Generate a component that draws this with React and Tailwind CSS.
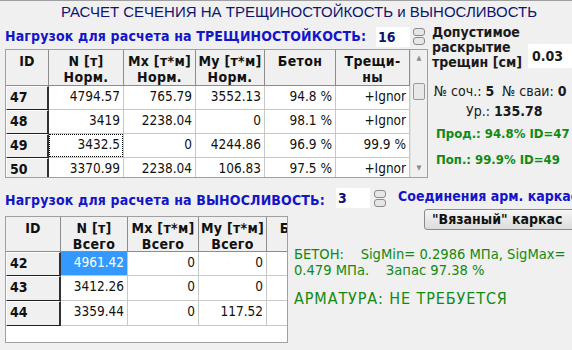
import React from "react";

const rows1 = [
  { id: "47", n: "4794.57", mx: "765.79", my: "3552.13", b: "94.8 %", t: "+Ignor" },
  { id: "48", n: "3419", mx: "2238.04", my: "0", b: "98.1 %", t: "+Ignor" },
  { id: "49", n: "3432.5", mx: "0", my: "4244.86", b: "96.9 %", t: "99.9 %", focus: true },
  { id: "50", n: "3370.99", mx: "2238.04", my: "106.83", b: "97.5 %", t: "+Ignor" },
];

const rows2 = [
  { id: "42", n: "4961.42", mx: "0", my: "0", sel: true },
  { id: "43", n: "3412.26", mx: "0", my: "0" },
  { id: "44", n: "3359.44", mx: "0", my: "117.52" },
];

function Spinner() {
  return (
    <div className="flex flex-col gap-[1px]">
      <div className="w-[12px] h-[8px] rounded-[3px] border border-[#8a8a8a] bg-[#e6e6e6]" />
      <div className="w-[12px] h-[8px] rounded-[3px] border border-[#8a8a8a] bg-[#e6e6e6]" />
    </div>
  );
}

function Head({ children }) {
  return (
    <div className="bg-[#f0f0f0] border-r border-b border-[#8c8c8c] text-center font-bold text-[14px] tracking-[0.3px] leading-[16px] pt-[3px] text-[#111] overflow-hidden whitespace-nowrap">
      {children}
    </div>
  );
}

function IdCell({ children }) {
  return (
    <div className="bg-[#f0f0f0] border-t border-l border-t-white border-l-white border-r-2 border-r-[#303030] border-b border-b-[#202020] font-bold text-[14px] leading-[16px] pl-[3px] pt-[2px] text-[#111]">
      {children}
    </div>
  );
}

function Cell({ children, sel, focus }) {
  return (
    <div
      className={
        sel
          ? "bg-[#3399ff] text-white border-r border-b border-[#c8c8c8] text-right pr-[3px] pt-[1px] text-[13.5px] leading-[18px]"
          : "bg-white text-[#111] border-r border-b border-[#c8c8c8] text-right pr-[3px] pt-[1px] text-[13.5px] leading-[18px]"
      }
    >
      {focus ? (
        <div className="-mt-[1px] -mr-[3px] h-[23px] border border-dotted border-black pr-[2px]">{children}</div>
      ) : (
        children
      )}
    </div>
  );
}

export default function App() {
  return (
    <div className="w-[572px] h-[350px] overflow-hidden bg-[#f0f0f0] font-['DejaVu_Sans_Condensed',sans-serif] border-t border-[#a0a0a0]">
      <div className="h-[23px] flex items-center justify-center pl-[26px] font-['Liberation_Sans',sans-serif] text-[15px] text-[#0e1470]">
        РАСЧЕТ СЕЧЕНИЯ НА ТРЕЩИНОСТОЙКОСТЬ и ВЫНОСЛИВОСТЬ
      </div>

      <div className="flex h-[157px]">
        <div className="w-[428px] pl-[5px] shrink-0">
          <div className="h-[25px] flex items-center">
            <span className="w-[371px] shrink-0 font-bold text-[14px] tracking-[0.15px] text-[#1515c8] whitespace-nowrap">
              Нагрузок для расчета на ТРЕЩИНОСТОЙКОСТЬ:
            </span>
            <div className="w-[34px] h-[20px] shrink-0 bg-white pl-[2px] font-bold text-[14px] leading-[20px] text-[#0e1470]">16</div>
            <div className="ml-[3px]">
              <Spinner />
            </div>
          </div>
          <div className="h-[129px] flex border border-[#a0a0a0] overflow-hidden">
            <div className="grid grid-cols-[43px_75px_72px_69px_71px_74px] grid-rows-[36px_24px_24px_24px_24px] bg-white">
              <Head>ID</Head>
              <Head>N [т]<br />Норм.</Head>
              <Head>Mx [т*м]<br />Норм.</Head>
              <Head>My [т*м]<br />Норм.</Head>
              <Head>Бетон</Head>
              <Head>Трещи-<br />ны</Head>
              {rows1.map((r) => (
                <React.Fragment key={r.id}>
                  <IdCell>{r.id}</IdCell>
                  <Cell focus={r.focus}>{r.n}</Cell>
                  <Cell>{r.mx}</Cell>
                  <Cell>{r.my}</Cell>
                  <Cell>{r.b}</Cell>
                  <Cell>{r.t}</Cell>
                </React.Fragment>
              ))}
            </div>
            <div className="w-[17px] flex flex-col items-center bg-[#f0f0f0] border-l border-[#e0e0e0]">
              <div className="h-[17px] flex items-center justify-center text-[7px] text-[#8a8a8a]">▲</div>
              <div className="mt-[16px] w-[12px] h-[17px] rounded-[2px] border border-[#9a9a9a] bg-[#e8e8e8]" />
              <div className="mt-auto h-[17px] flex items-center justify-center text-[7px] text-[#8a8a8a]">▼</div>
            </div>
          </div>
        </div>

        <div className="flex-1 pl-[4px] pt-[1px] text-[#1a1a1a]">
          <div className="flex">
            <div className="w-[96px] font-bold text-[14px] leading-[15px]">
              Допустимое
              <br />
              раскрытие
              <br />
              трещин [см]
            </div>
            <div className="mt-[19px] flex-1 h-[24px] bg-white pl-[4px] font-bold text-[14px] leading-[24px]">0.03</div>
          </div>
          <div className="mt-[12px] pl-[2px] text-[14px] leading-[18px] whitespace-nowrap">
            № соч.: <b>5</b>&nbsp; № сваи: <b>0</b>
          </div>
          <div className="mt-[2px] pl-[34px] text-[14px] leading-[18px]">
            Ур.: <b>135.78</b>
          </div>
          <div className="mt-[5px] pl-[4px] font-bold text-[13px] leading-[18px] text-[#128a12] whitespace-nowrap">
            Прод.: 94.8% ID=47
          </div>
          <div className="mt-[8px] pl-[4px] font-bold text-[13px] leading-[18px] text-[#128a12] whitespace-nowrap">
            Поп.: 99.9% ID=49
          </div>
        </div>
      </div>

      <div className="pl-[5px]">
        <div className="h-[28px] pt-[6px] flex items-center">
          <span className="w-[331px] shrink-0 font-bold text-[14px] tracking-[0.15px] text-[#1515c8] mt-[4px] whitespace-nowrap">
            Нагрузок для расчета на ВЫНОСЛИВОСТЬ:
          </span>
          <div className="w-[34px] h-[20px] shrink-0 bg-white pl-[2px] font-bold text-[14px] leading-[20px] text-[#0e1470]">3</div>
          <div className="ml-[4px] shrink-0">
            <Spinner />
          </div>
          <span className="ml-[12px] shrink-0 font-bold text-[14px] text-[#1515c8] whitespace-nowrap -mt-[4px]">
            Соединения арм. каркас
          </span>
        </div>
        <div className="flex">
          <div className="mt-[7px] w-[283px] h-[127px] shrink-0 border border-[#a0a0a0] bg-white overflow-hidden">
            <div className="grid grid-cols-[55px_67px_71px_68px_71px] grid-rows-[35px_24px_25px_25px]">
              <Head>ID</Head>
              <Head>N [т]<br />Всего</Head>
              <Head>Mx [т*м]<br />Всего</Head>
              <Head>My [т*м]<br />Всего</Head>
              <Head>Бетон</Head>
              {rows2.map((r) => (
                <React.Fragment key={r.id}>
                  <IdCell>{r.id}</IdCell>
                  <Cell sel={r.sel}>{r.n}</Cell>
                  <Cell>{r.mx}</Cell>
                  <Cell>{r.my}</Cell>
                  <Cell />
                </React.Fragment>
              ))}
            </div>
          </div>
          <div className="flex-1 pl-[6px] overflow-hidden">
            <div className="ml-[130px] w-[170px] h-[21px] rounded-[3px] border border-[#8a8a8a] bg-gradient-to-b from-[#f6f6f6] to-[#dcdcdc] pl-[7px] font-bold text-[14px] leading-[19px] text-[#111] whitespace-nowrap">
              "Вязаный" каркас
            </div>
            <div className="mt-[16px] text-[14.6px] leading-[16px] text-[#128a12] whitespace-nowrap">
              БЕТОН:&nbsp;&nbsp;&nbsp;&nbsp;SigMin= 0.2986 МПа, SigMax=
            </div>
            <div className="text-[14.6px] leading-[16px] text-[#128a12] whitespace-nowrap">
              0.479 МПа.&nbsp;&nbsp;&nbsp;&nbsp;Запас 97.38 %
            </div>
            <div className="mt-[12px] text-[16px] tracking-[0.9px] leading-[18px] text-[#128a12] whitespace-nowrap">
              АРМАТУРА: НЕ ТРЕБУЕТСЯ
            </div>
          </div>
        </div>
      </div>
    </div>
  );
}
